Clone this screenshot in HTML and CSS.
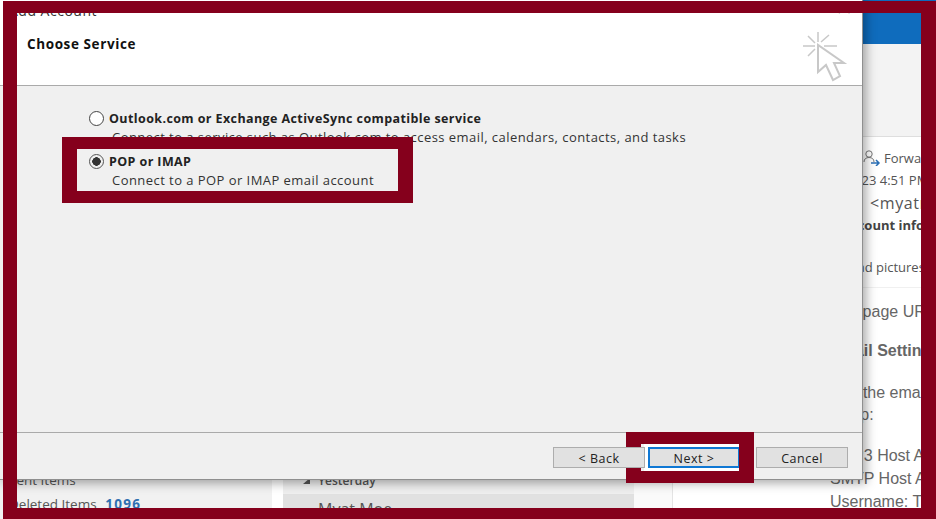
FILE: index.html
```html
<!DOCTYPE html>
<html lang="en">
<head>
    <meta charset="UTF-8">
    <title>Add Account</title>
    <link rel="stylesheet" href="styles.css">
</head>
<body>
    <div class="screen">
        <div class="outlook">
            <div class="titlebar"></div>
            <div class="ribbon"></div>
            <div class="panes">
                <div class="folders">
                    <div class="folder">Sent Items</div>
                    <div class="folder">Deleted Items <strong>1096</strong></div>
                </div>
                <div class="list">
                    <div class="group"><span class="triangle"></span>Yesterday</div>
                    <div class="row">Myat Moe</div>
                </div>
                <div class="list-gutter"></div>
                <div class="reading">
                    <div class="head">
                        <div class="forwarded">
                            <svg class="forward-icon" width="18" height="16" viewBox="0 0 18 16">
                                <circle cx="6" cy="4" r="3.2" fill="none" stroke="#777" stroke-width="1"/>
                                <path d="M1 12c0-3 2-4.5 5-4.5s5 1.5 5 4.5" fill="none" stroke="#777" stroke-width="1"/>
                                <path d="M8 13h8M13 10l3 3-3 3" fill="none" stroke="#2a6fb5" stroke-width="1.5"/>
                            </svg>
                            Forwarded
                        </div>
                        <div class="sent">12/2023 4:51 PM</div>
                        <div class="sender">&lt;myatmoe@mail.com&gt;</div>
                        <div class="account">Account information</div>
                        <div class="pictures">Download pictures</div>
                    </div>
                    <div class="body">
                        <p class="homepage">Webpage URL</p>
                        <p class="settings">Email Settings</p>
                        <p class="use">Use the email</p>
                        <p class="setup">setup:</p>
                        <p class="pop3">POP3 Host Address</p>
                        <p class="smtp">SMTP Host Address</p>
                        <p class="smtp">Username: The email</p>
                    </div>
                </div>
            </div>
        </div>

        <div class="dialog">
            <div class="dialog-title">
                <span>Add Account</span>
                <span class="close">×</span>
            </div>
            <div class="dialog-head">
                <h1>Choose Service</h1>
                <svg class="wizard-icon" width="46" height="52" viewBox="0 0 46 52">
                    <path d="M16 1v10M1 15h12M22 15h13M6 5l7 7M27 4l-8 7M6 25l7-7" fill="none" stroke="#c8c8c8" stroke-width="1.5"/>
                    <path d="M16 14v27l8-7 7 15 7-4-6-13h10z" fill="#fff" stroke="#c8c8c8" stroke-width="2"/>
                </svg>
            </div>
            <div class="dialog-body">
                <div class="option">
                    <span class="radio"></span>
                    <div>
                        <div class="option-name">Outlook.com or Exchange ActiveSync compatible service</div>
                        <div class="option-text">Connect to a service such as Outlook.com to access email, calendars, contacts, and tasks</div>
                    </div>
                </div>
                <div class="option">
                    <span class="radio checked"></span>
                    <div>
                        <div class="option-name">POP or IMAP</div>
                        <div class="option-text">Connect to a POP or IMAP email account</div>
                    </div>
                </div>
            </div>
            <div class="dialog-foot">
                <button class="btn back">&lt; Back</button>
                <button class="btn next">Next &gt;</button>
                <button class="btn cancel">Cancel</button>
            </div>
        </div>

        <div class="frame"></div>
        <div class="mark mark-pop"></div>
        <div class="mark mark-next"></div>
    </div>
</body>
</html>
```

FILE: styles.css
```css
html, body {
    margin: 0;
    padding: 0;
}
body {
    width: 936px;
    height: 519px;
    overflow: hidden;
    background: #fff;
    font-family: "Open Sans", sans-serif;
}
.screen {
    position: relative;
    width: 936px;
    height: 519px;
    overflow: hidden;
    background: #fff;
}

/* outlook window behind the dialog */
.outlook {
    display: flex;
    flex-direction: column;
    height: 100%;
}
.titlebar {
    height: 44px;
    flex: none;
    background: #0f6cbd;
}
.ribbon {
    height: 93px;
    flex: none;
    box-sizing: border-box;
    background: #f3f3f3;
    border-bottom: 1px solid #dedede;
}
.panes {
    flex: 1;
    display: flex;
    min-height: 0;
}
.folders {
    width: 272px;
    flex: none;
    box-sizing: border-box;
    padding: 0 0 7px 9px;
    display: flex;
    flex-direction: column;
    justify-content: flex-end;
    gap: 8px;
    background: #f1f1f1;
    font-size: 13.5px;
    color: #555;
}
.folder {
    height: 16px;
    line-height: 16px;
    white-space: nowrap;
}
.folder strong {
    margin-left: 5px;
    letter-spacing: 1.3px;
    color: #2f6fb0;
}
.list {
    width: 351px;
    margin-left: 11px;
    flex: none;
    display: flex;
    flex-direction: column;
    justify-content: flex-end;
    background: #f1f1f1;
    color: #555;
}
.group {
    height: 25px;
    box-sizing: border-box;
    padding: 5px 0 0 20px;
    display: flex;
    align-items: flex-start;
    font-size: 12px;
    font-weight: 600;
    line-height: 14px;
    background: #efefef;
}
.triangle {
    width: 0;
    height: 0;
    margin: 4px 8px 0 0;
    border-left: 7px solid transparent;
    border-bottom: 6px solid #555;
}
.row {
    height: 25px;
    padding-left: 35px;
    font-size: 16px;
    line-height: 30px;
    background: #e1e1e1;
}
.list-gutter {
    width: 38px;
    flex: none;
    background: #fafafa;
    border-right: 1px solid #e4e4e4;
}
.reading {
    flex: 1;
    min-width: 0;
    white-space: nowrap;
    color: #555;
}
.head {
    height: 151px;
    box-sizing: border-box;
    padding: 12px 0 0 158px;
    font-size: 13px;
    border-bottom: 1px solid #f0f0f0;
}
.forwarded {
    display: flex;
    align-items: center;
    gap: 3px;
    height: 18px;
    margin-left: 32px;
}
.forward-icon {
    flex: none;
}
.sent {
    margin: 5px 0 0 -4px;
    line-height: 16px;
}
.sender {
    margin: 5px 0 0 39px;
    font-size: 16px;
    letter-spacing: 0.6px;
    line-height: 20px;
}
.account {
    margin: 4px 0 0 11px;
    font-weight: 700;
    line-height: 16px;
    color: #444;
}
.pictures {
    margin: 26px 0 0 -20px;
    line-height: 16px;
}
.body {
    padding-left: 157px;
    font-family: "Liberation Sans", sans-serif;
    font-size: 16px;
    color: #666;
}
.body p {
    margin: 0;
    line-height: 20px;
}
.homepage {
    padding-top: 14px;
}
.settings {
    padding-top: 19px;
    font-weight: 700;
}
.use {
    padding-top: 22px;
}
.setup {
    padding-top: 2px;
}
.pop3 {
    padding-top: 21px;
}
.smtp {
    padding-top: 3px;
}

/* add account dialog */
.dialog {
    position: absolute;
    left: 0;
    top: -6px;
    width: 862px;
    height: 485px;
    display: flex;
    flex-direction: column;
    background: #f0f0f0;
    border-right: 1px solid #8f8f8f;
    border-bottom: 1px solid #8f8f8f;
    box-shadow: 3px 3px 10px rgba(0, 0, 0, 0.35);
}
.dialog-title {
    height: 22px;
    flex: none;
    display: flex;
    justify-content: space-between;
    overflow: hidden;
    padding: 0 10px 0 9px;
    background: #fff;
    font-size: 14px;
    letter-spacing: 0.5px;
    line-height: 33px;
    color: #333;
}
.close {
    font-size: 26px;
    line-height: 26px;
    font-weight: 300;
}
.dialog-head {
    height: 69px;
    flex: none;
    display: flex;
    justify-content: space-between;
    padding: 0 14px 0 27px;
    background: #fff;
    border-bottom: 1px solid #aaa;
}
.dialog-head h1 {
    margin: 18px 0 0;
    font-size: 13.5px;
    font-weight: 700;
    letter-spacing: 0.6px;
    line-height: 20px;
    color: #111;
}
.wizard-icon {
    flex: none;
    margin-top: 15px;
}
.dialog-body {
    flex: 1;
    display: flex;
    flex-direction: column;
    gap: 9px;
    padding: 25px 0 0 89px;
}
.option {
    display: flex;
    gap: 5px;
}
.radio {
    width: 15px;
    height: 15px;
    flex: none;
    box-sizing: border-box;
    border: 1px solid #444;
    border-radius: 50%;
    background: #fff;
}
.radio.checked {
    background: radial-gradient(circle, #333 0, #333 4px, #f0f0f0 4.5px);
    border-color: #555;
}
.option-name {
    font-size: 12.5px;
    font-weight: 700;
    letter-spacing: 0.4px;
    line-height: 16px;
    color: #222;
}
.option-text {
    margin: 2px 0 0 3px;
    font-size: 13px;
    letter-spacing: 0.45px;
    line-height: 16px;
    color: #333;
    white-space: nowrap;
}
.dialog-foot {
    height: 47px;
    flex: none;
    box-sizing: border-box;
    display: flex;
    justify-content: flex-end;
    gap: 3px;
    padding: 14px 14px 0 0;
    border-top: 1px solid #aaa;
}
.btn {
    width: 92px;
    height: 21px;
    box-sizing: border-box;
    padding: 1px 0 0;
    border: 1px solid #adadad;
    background: #e1e1e1;
    font-family: "Open Sans", sans-serif;
    font-size: 12.5px;
    letter-spacing: 0.5px;
    color: #222;
}
.back {
    position: relative;
    z-index: 1;
}
.next {
    border: 2px solid #0f78d4;
    box-shadow: 0 0 0 4px #fff;
}
.cancel {
    margin-left: 13px;
}

/* annotation marks drawn on the screenshot */
.frame {
    position: absolute;
    left: 3px;
    top: 1px;
    right: 0;
    bottom: 0;
    border-style: solid;
    border-color: #85001c;
    border-width: 12px 15px 11px 14px;
}
.mark {
    position: absolute;
    box-sizing: border-box;
    border: solid #85001c;
}
.mark-pop {
    left: 62px;
    top: 137px;
    width: 351px;
    height: 66px;
    border-width: 12px 15px;
}
.mark-next {
    left: 626px;
    top: 432px;
    width: 128px;
    height: 51px;
    border-width: 12px 15px;
}
```
